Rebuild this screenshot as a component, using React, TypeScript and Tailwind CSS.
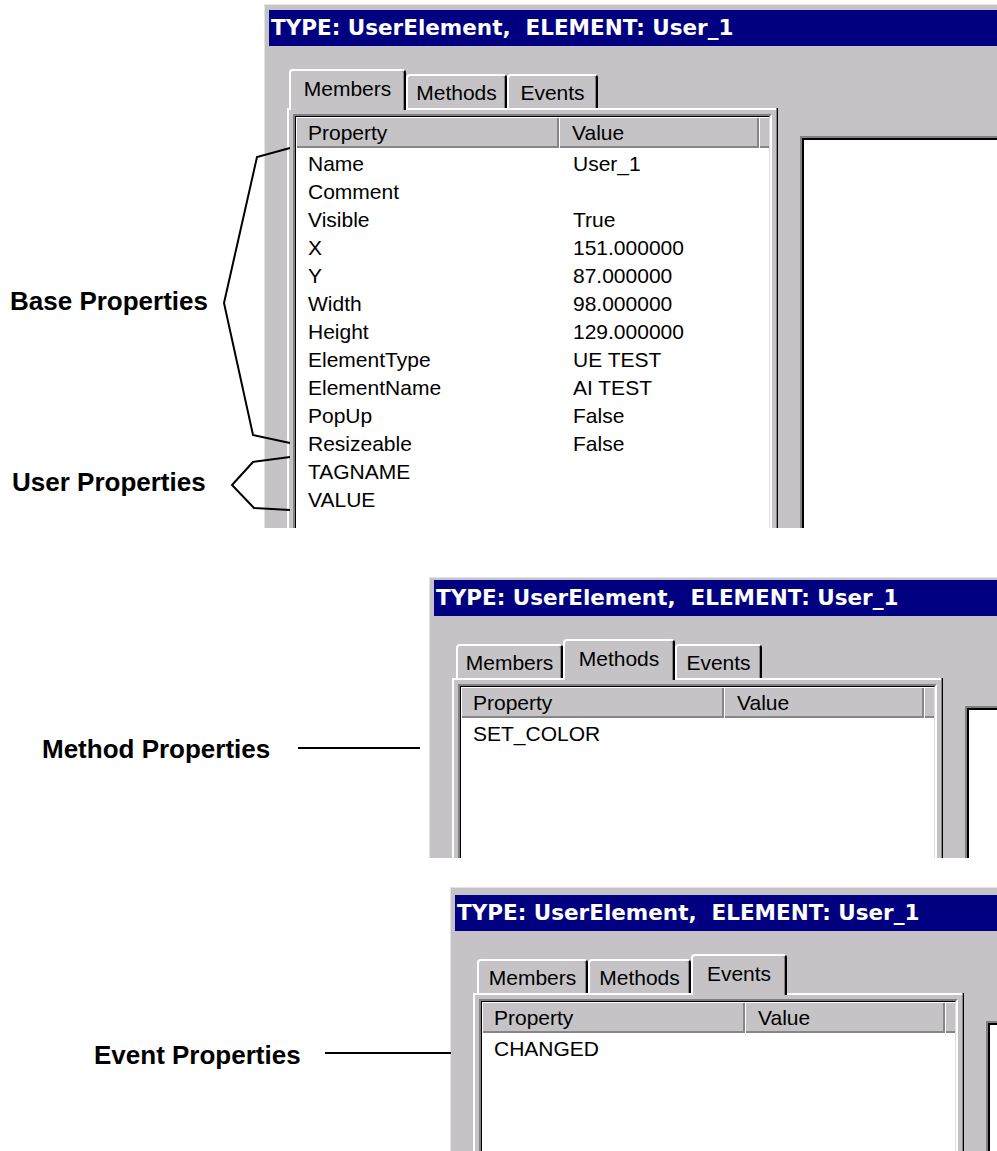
import React from "react";

type Row = { k: string; v: string };
type Tab = { label: string; w: string };

const memberRows: Row[] = [
  { k: "Name", v: "User_1" },
  { k: "Comment", v: "" },
  { k: "Visible", v: "True" },
  { k: "X", v: "151.000000" },
  { k: "Y", v: "87.000000" },
  { k: "Width", v: "98.000000" },
  { k: "Height", v: "129.000000" },
  { k: "ElementType", v: "UE TEST" },
  { k: "ElementName", v: "AI TEST" },
  { k: "PopUp", v: "False" },
  { k: "Resizeable", v: "False" },
  { k: "TAGNAME", v: "" },
  { k: "VALUE", v: "" },
];

function TabStrip({ tabs, active }: { tabs: Tab[]; active: number }) {
  return (
    <div className={`flex h-[39px] items-end ${active === 0 ? "pl-[2px]" : "pl-[4px]"}`}>
      {tabs.map((t, i) =>
        i === active ? (
          <div
            key={t.label}
            className={`${t.w} relative z-10 -mb-[2px] flex h-[41px] items-center justify-center rounded-t-[4px] border-t-2 border-r-2 border-l-2 border-t-white border-r-black border-l-white bg-[#c5c3c6] pb-[4px] shadow-[inset_-1px_0_0_#868686]`}
          >
            {t.label}
          </div>
        ) : (
          <div
            key={t.label}
            className={`${t.w} flex h-[34px] items-center justify-center rounded-t-[4px] border-t-2 border-r-2 border-l-2 border-t-white border-r-black border-l-white bg-[#c5c3c6] pt-[1px] shadow-[inset_-1px_0_0_#868686]`}
          >
            {t.label}
          </div>
        )
      )}
    </div>
  );
}

function ListView({ rows }: { rows: Row[] }) {
  return (
    <div className="border-2 border-t-[#808080] border-r-white border-b-white border-l-[#808080]">
      <div className="h-[900px] border border-t-black border-r-[#dfdfdf] border-b-[#dfdfdf] border-l-black bg-white">
        <div className="flex h-[31px]">
          <div className="flex w-[263px] items-center bg-[#c5c3c6] pl-[12px] shadow-[inset_1px_1px_0_#ffffff,inset_-2px_-2px_0_#868686]">
            Property
          </div>
          <div className="flex w-[200px] items-center bg-[#c5c3c6] pl-[13px] shadow-[inset_1px_1px_0_#ffffff,inset_-2px_-2px_0_#868686]">
            Value
          </div>
          <div className="flex-1 bg-[#c5c3c6] shadow-[inset_1px_1px_0_#ffffff,inset_0_-2px_0_#868686]" />
        </div>
        <div className="pt-[2px]">
          {rows.map((r) => (
            <div key={r.k} className="flex h-[28px] items-center">
              <div className="w-[263px] pl-[12px]">{r.k}</div>
              <div className="pl-[14px]">{r.v}</div>
            </div>
          ))}
        </div>
      </div>
    </div>
  );
}

function Panel({
  height,
  top,
  pt,
  tabs,
  active,
  rows,
}: {
  height: string;
  top: string;
  pt: string;
  tabs: Tab[];
  active: number;
  rows: Row[];
}) {
  return (
    <div
      className={`${height} ${top} ${pt} flex-1 overflow-hidden border-t border-l border-t-[#e4e4e4] border-l-[#e4e4e4] bg-[#c5c3c6] pl-[4px]`}
    >
      <div className="flex h-[36px] items-center whitespace-pre bg-[#000080] pl-[2px] font-['DejaVu_Sans',sans-serif] text-[21.5px] font-bold text-white">
        {"TYPE: UserElement,  ELEMENT: User_1"}
      </div>
      <div className="flex items-start pt-[23px] pl-[18px]">
        <div className="w-[491px] shrink-0">
          <TabStrip tabs={tabs} active={active} />
          <div className="h-[900px] bg-[#c5c3c6] p-[6px] shadow-[inset_-1px_-1px_0_#000000,inset_-2px_-2px_0_#868686,inset_2px_2px_0_#ffffff]">
            <ListView rows={rows} />
          </div>
        </div>
        <div className="mt-[67px] ml-[22px] h-[900px] flex-1 border-t-2 border-l-2 border-t-[#808080] border-l-[#808080] bg-white shadow-[inset_2px_2px_0_#000000]" />
      </div>
    </div>
  );
}

export default function App() {
  const label = "font-['Liberation_Sans',Arial,sans-serif] text-[26px] font-bold leading-[30px] text-black whitespace-nowrap";
  return (
    <div className="relative h-[1151px] w-[997px] overflow-hidden bg-white font-['Liberation_Sans',Arial,sans-serif] text-[21px] text-black">
      {/* Section 1 */}
      <div className="flex h-[528px]">
        <div className="w-[264px] shrink-0">
          <div className={`${label} pt-[286px] pl-[10px]`}>Base Properties</div>
          <div className={`${label} mt-[151px] pl-[12px]`}>User Properties</div>
        </div>
        <Panel
          height="h-[524px]"
          top="mt-[4px]"
          pt="pt-[5px]"
          active={0}
          rows={memberRows}
          tabs={[
            { label: "Members", w: "w-[117px]" },
            { label: "Methods", w: "w-[101px]" },
            { label: "Events", w: "w-[91px]" },
          ]}
        />
      </div>

      {/* Section 2 */}
      <div className="flex h-[330px]">
        <div className="w-[429px] shrink-0">
          <div className={`${label} pt-[206px] pl-[42px]`}>Method Properties</div>
        </div>
        <Panel
          height="h-[281px]"
          top="mt-[49px]"
          pt="pt-[2px]"
          active={1}
          rows={[{ k: "SET_COLOR", v: "" }]}
          tabs={[
            { label: "Members", w: "w-[107px]" },
            { label: "Methods", w: "w-[112px]" },
            { label: "Events", w: "w-[87px]" },
          ]}
        />
      </div>

      {/* Section 3 */}
      <div className="flex h-[293px]">
        <div className="w-[450px] shrink-0">
          <div className={`${label} pt-[182px] pl-[94px]`}>Event Properties</div>
        </div>
        <Panel
          height="h-[264px]"
          top="mt-[29px]"
          pt="pt-[7px]"
          active={2}
          rows={[{ k: "CHANGED", v: "" }]}
          tabs={[
            { label: "Members", w: "w-[111px]" },
            { label: "Methods", w: "w-[103px]" },
            { label: "Events", w: "w-[96px]" },
          ]}
        />
      </div>

      {/* Annotation connector lines */}
      <svg
        className="pointer-events-none absolute top-0 left-0"
        width="997"
        height="1151"
        viewBox="0 0 997 1151"
      >
        <g fill="none" stroke="#000" strokeWidth="2" strokeLinejoin="miter">
          <polyline points="290,148 257,157 224,303 253,435 290,443" />
          <polyline points="290,457 253,462 232,485 254,508 290,510" />
          <line x1="298" y1="748" x2="420" y2="748" />
          <line x1="325" y1="1053" x2="451" y2="1053" />
        </g>
      </svg>
    </div>
  );
}
